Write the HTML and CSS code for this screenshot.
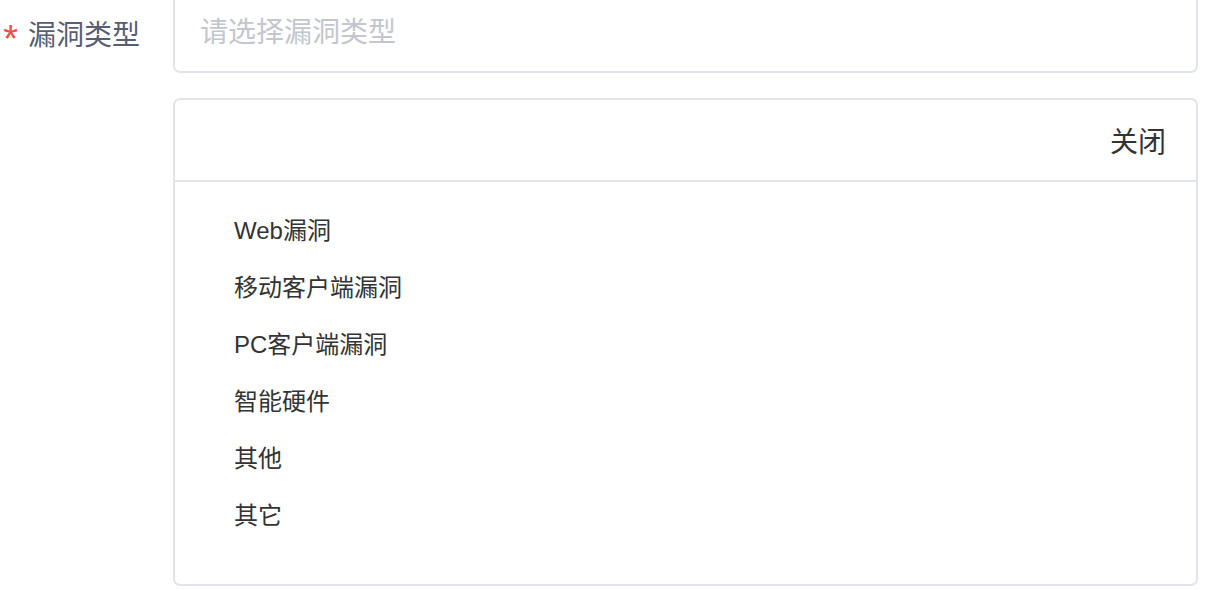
FILE: index.html
```html
<!DOCTYPE html>
<html lang="zh-CN">
<head>
<meta charset="utf-8">
<title>漏洞类型</title>
<link rel="stylesheet" href="styles.css">
</head>
<body>
<div class="form-item">
  <label class="label"><span class="req">*</span>漏洞类型</label>
  <div class="content">
    <div class="input">请选择漏洞类型</div>
    <div class="panel">
      <div class="panel-head"><span class="close">关闭</span></div>
      <ul class="options">
        <li>Web漏洞</li>
        <li>移动客户端漏洞</li>
        <li>PC客户端漏洞</li>
        <li>智能硬件</li>
        <li>其他</li>
        <li>其它</li>
      </ul>
    </div>
  </div>
</div>
</body>
</html>
```
FILE: styles.css
```css
html, body {
  margin: 0;
  padding: 0;
  background: #ffffff;
}
body {
  font-family: "Liberation Sans", "Noto Sans CJK SC", sans-serif;
  overflow: hidden;
}
.form-item {
  display: flex;
  margin-top: -7px;
}
.label {
  width: 173px;
  box-sizing: border-box;
  flex: none;
  padding-right: 33px;
  text-align: right;
  font-size: 28px;
  line-height: 86px;
  color: #575e72;
  white-space: nowrap;
}
.req {
  color: #ef4d45;
  margin-right: 10px;
  font-size: 38px;
  vertical-align: -7px;
  line-height: 1;
}
.content {
  flex: 1;
  margin-right: 8px;
  min-width: 0;
}
.input {
  height: 80px;
  box-sizing: border-box;
  border: 2px solid #e1e4ea;
  border-radius: 7px;
  padding-left: 25px;
  font-size: 28px;
  line-height: 76px;
  color: #c3c6cd;
}
.panel {
  margin-top: 25px;
  border: 2px solid #e1e4ea;
  border-radius: 7px;
}
.panel-head {
  height: 80px;
  border-bottom: 2px solid #e1e4ea;
  display: flex;
  justify-content: flex-end;
  align-items: center;
  padding-right: 30px;
}
.close {
  font-size: 28px;
  color: #333333;
}
.options {
  list-style: none;
  margin: 0;
  padding: 20px 0 40px 59px;
}
.options li {
  height: 57px;
  line-height: 57px;
  font-size: 24px;
  color: #333333;
}
```
